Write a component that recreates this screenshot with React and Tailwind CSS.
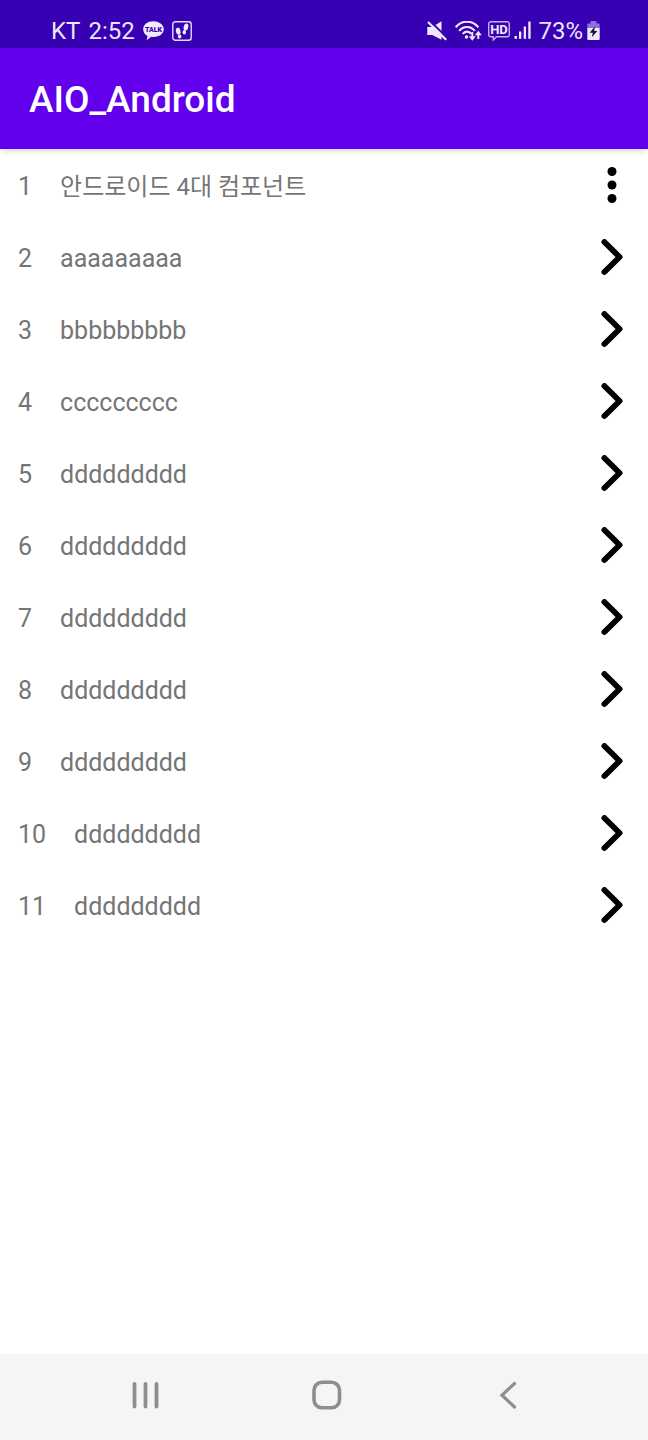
const ITEMS = [
  '안드로이드 4대 컴포넌트',
  'aaaaaaaaa',
  'bbbbbbbbb',
  'ccccccccc',
  'ddddddddd',
  'ddddddddd',
  'ddddddddd',
  'ddddddddd',
  'ddddddddd',
  'ddddddddd',
  'ddddddddd',
]

// CJK glyphs run wider than the Latin ones, so they get one size less
const isHangul = s => /[\uac00-\ud7a3]/.test(s)

// ── Status bar icons ────────────────────────────────────────────────────────
function TalkIcon() {
  return (
    <svg width="21" height="20" viewBox="0 0 21 20" aria-hidden="true">
      <path d="M10.500 .3C4.500 .3 .2 3.800 .2 8.300c0 2.900 1.700 5.300 4.300 6.600L3.700 19.300l4.500-3.500c.7.100 1.500.2 2.300.2 6 0 10.300-3.400 10.300-7.700S16.500.3 10.500.3z" fill="#f0eafc" />
      <text x="10.500" y="10.900" textAnchor="middle" fontSize="7" fontWeight="900" fill="#3700b3">TALK</text>
    </svg>
  )
}

function StepsIcon() {
  return (
    <svg width="20" height="20" viewBox="0 0 20 20" aria-hidden="true">
      <rect x="0.800" y="0.800" width="18.400" height="18.400" rx="2.500" fill="none" stroke="#e4dbf9" strokeWidth="1.400" />
      <g fill="#f0eafc">
        <ellipse cx="6.200" cy="10.200" rx="2.300" ry="3.600" transform="rotate(-12 6.200 10.200)" />
        <ellipse cx="7.700" cy="15.500" rx="1.800" ry="2" />
        <ellipse cx="14" cy="6" rx="2.300" ry="3.500" transform="rotate(12 14 6)" />
        <ellipse cx="12.300" cy="11.300" rx="1.700" ry="2.200" />
      </g>
    </svg>
  )
}

function MuteIcon() {
  return (
    <svg width="20" height="20" viewBox="0 0 20 20" aria-hidden="true">
      <path d="M.3 6h5L14.500 .3v18.500L5.300 14H.3z" fill="#f0eafc" />
      <path d="M2.500 -.5 21 17.500" stroke="#3700b3" strokeWidth="2" />
      <path d="M1 1 19.200 18.800" stroke="#f0eafc" strokeWidth="2.200" />
    </svg>
  )
}

function WifiIcon() {
  return (
    <svg width="27" height="20" viewBox="0 0 27 20" fill="none" stroke="#f0eafc" strokeWidth="2.100" aria-hidden="true">
      <path d="M.7 6.300C6.500-1.100 17.500-1.100 23.300 6.300" />
      <path d="M4.200 9.900C8.300 4.600 15.700 4.600 19.800 9.900" />
      <path d="M7.700 13c2.300-3.200 6.300-3.200 8.600 0" />
      <circle cx="11.500" cy="16" r="1.700" fill="#f0eafc" stroke="none" />
      <path d="M17.300 11v6.500M23.300 18v-6" strokeWidth="1.900" />
      <path d="M13.800 15.300h7l-3.500 4.500zM19.800 14.200h7l-3.500-4.500z" fill="#f0eafc" stroke="none" />
    </svg>
  )
}

function HdIcon() {
  return (
    <svg width="22" height="20" viewBox="0 0 22 20" aria-hidden="true">
      <path d="M2.700 .8h16.600a2 2 0 0 1 2 2v11a2 2 0 0 1-2 2H8.500L5.300 19v-3.200H2.700a2 2 0 0 1-2-2v-11a2 2 0 0 1 2-2z" fill="none" stroke="#c4b1ee" strokeWidth="1.400" />
      <text x="11" y="13" textAnchor="middle" fontSize="13" fontWeight="700" fill="#f0eafc">HD</text>
    </svg>
  )
}

function SignalIcon() {
  return (
    <svg width="18" height="20" viewBox="0 0 18 20" fill="#f0eafc" aria-hidden="true">
      <rect x="0.500" y="15" width="2.500" height="2.800" />
      <rect x="5" y="10.500" width="2.300" height="7.300" />
      <rect x="9.700" y="5.500" width="2.300" height="12.300" />
      <rect x="14.300" y="0.500" width="2.300" height="17.300" />
    </svg>
  )
}

function BatteryIcon() {
  return (
    <svg width="13" height="20" viewBox="0 0 13 20" aria-hidden="true">
      <path d="M3.500 0h6v2.400H12a.7.700 0 0 1 .7.700V7.500H.3V3.100a.7.700 0 0 1 .7-.7h2.500z" fill="#8f6fdb" />
      <path d="M.3 7h12.400v11a1 1 0 0 1-1 1H1.300a1 1 0 0 1-1-1z" fill="#f0eafc" />
      <path d="M8 5.500 2.600 11.700h3.200l-1 4.600L10.400 10H7.200z" fill="#1d1230" />
    </svg>
  )
}

// ── Row icons ───────────────────────────────────────────────────────────────
function MoreIcon() {
  return (
    <svg width="36" height="36" viewBox="0 0 36 36" aria-hidden="true">
      <circle cx="18" cy="4.500" r="4.500" />
      <circle cx="18" cy="18" r="4.500" />
      <circle cx="18" cy="31.500" r="4.500" />
    </svg>
  )
}

function ChevronIcon() {
  return (
    <svg width="36" height="36" viewBox="0 0 36 36" fill="none" stroke="#000" strokeWidth="5.800" strokeLinecap="round" strokeLinejoin="round" aria-hidden="true">
      <path d="M10.400 3 25.600 18 10.400 33" />
    </svg>
  )
}

function StatusBar() {
  return (
    <div className="flex h-12 items-center justify-between bg-[#3700b3] pt-3.5 pr-12 pl-[51px] text-2xl text-[#ece5fb]">
      <div className="flex items-center gap-2">
        <span>KT</span>
        <span>2:52</span>
        <TalkIcon />
        <StepsIcon />
      </div>
      <div className="flex items-center gap-1">
        <MuteIcon />
        <span className="mr-0.5 ml-1"><WifiIcon /></span>
        <HdIcon />
        <SignalIcon />
        <span className="ml-0.5">73%</span>
        <BatteryIcon />
      </div>
    </div>
  )
}

function NavBar() {
  return (
    <nav className="grid h-[86px] grid-cols-3 bg-[#f5f5f5] pr-[50px] pb-1 pl-[55px]">
      <button type="button" aria-label="Recents" className="flex items-center justify-center">
        <svg width="30" height="30" viewBox="0 0 30 30" stroke="#8e8e8e" strokeWidth="3.800" strokeLinecap="round">
          <path d="M3.500 4v22.500M14.500 4v22.500M25.500 4v22.500" />
        </svg>
      </button>
      <button type="button" aria-label="Home" className="flex items-center justify-center">
        <svg width="30" height="30" viewBox="0 0 30 30" fill="none" stroke="#8e8e8e" strokeWidth="3.600">
          <rect x="2" y="2.300" width="25.500" height="25.500" rx="8" />
        </svg>
      </button>
      <button type="button" aria-label="Back" className="flex items-center justify-center">
        <svg width="30" height="30" viewBox="0 0 30 30" fill="none" stroke="#8e8e8e" strokeWidth="3.200" strokeLinecap="round">
          <path d="M21.500 3.500 9 15.200 21.500 27" />
        </svg>
      </button>
    </nav>
  )
}

export default function App() {
  return (
    <div className="flex min-h-screen flex-col bg-white font-[Roboto,'Noto_Sans_CJK_KR',sans-serif]">
      <StatusBar />
      <header className="flex h-[101px] items-center bg-[#6200ee] px-[29px] pt-0.5 shadow-md">
        <h1 className="text-[37px] leading-10 font-medium text-white">AIO_Android</h1>
      </header>

      <main className="flex-1">
        <ul>
          {ITEMS.map((label, i) => (
            <li key={i} className="flex h-[72px] items-center px-[18px] text-[25px] leading-9 text-[#757575]">
              <span className="pt-1">{i + 1}</span>
              <span className={`ml-7 flex-1 pt-1 ${isHangul(label) ? 'text-2xl leading-9' : ''}`}>{label}</span>
              <button type="button" aria-label={i === 0 ? 'More options' : 'Open'}>
                {i === 0 ? <MoreIcon /> : <ChevronIcon />}
              </button>
            </li>
          ))}
        </ul>
      </main>

      <NavBar />
    </div>
  )
}
